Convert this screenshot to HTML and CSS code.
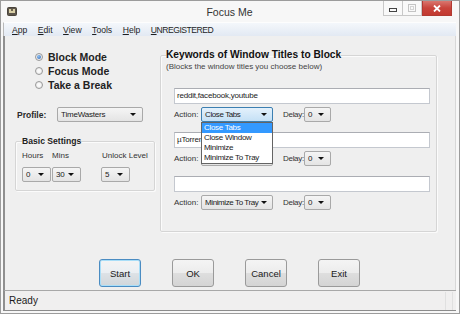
FILE: index.html
```html
<!DOCTYPE html>
<html>
<head>
    <title>Focus Me</title>
    <link rel="stylesheet" href="styles.css">
</head>
<body>
<div class="window">
    <!-- Title bar -->
    <div class="titlebar">
        <div class="tb-left">
            <svg class="app-icon" width="10" height="9" viewBox="0 0 10 9">
                <rect x="0.5" y="0.5" width="9" height="8" rx="1" fill="#5d564c" stroke="#4a443b"/>
                <rect x="2" y="2" width="6" height="4" fill="#d9cfa6"/>
                <rect x="4" y="2" width="2" height="2" fill="#6b624f"/>
            </svg>
        </div>
        <div class="title">Focus Me</div>
        <div class="tb-right">
            <span class="ctl ctl-min"><svg width="8" height="4" viewBox="0 0 8 4"><rect x="0.5" y="0.5" width="7" height="3" fill="none" stroke="#444"/></svg></span>
            <span class="ctl ctl-max"><svg width="8" height="8" viewBox="0 0 8 8"><rect x="0.5" y="0.5" width="7" height="7" fill="none" stroke="#c4c4c4"/><rect x="2.5" y="2.5" width="3" height="3" fill="none" stroke="#d4d4d4"/></svg></span>
            <span class="ctl ctl-close"><svg width="8" height="7" viewBox="0 0 8 7"><path d="M1 0.5 L7 6.5 M7 0.5 L1 6.5" stroke="#fff" stroke-width="1.8"/></svg></span>
        </div>
    </div>

    <!-- Menu -->
    <div class="menubar">
        <span><u>A</u>pp</span>
        <span><u>E</u>dit</span>
        <span><u>V</u>iew</span>
        <span><u>T</u>ools</span>
        <span><u>H</u>elp</span>
        <span class="unreg"><u>U</u>NREGISTERED</span>
    </div>

    <div class="client">
        <div class="panels">
            <div class="left">
                <div class="modes">
                    <div class="radio-row"><span class="radio checked"></span>Block Mode</div>
                    <div class="radio-row"><span class="radio"></span>Focus Mode</div>
                    <div class="radio-row"><span class="radio"></span>Take a Break</div>
                </div>
                <div class="profile-row">
                    <span class="profile-label">Profile:</span>
                    <div class="combo combo-profile"><span>TimeWasters</span><i class="arrow"></i></div>
                </div>
                <fieldset class="basic">
                    <legend>Basic Settings</legend>
                    <div class="basic-cols">
                        <div class="col col-hours">
                            <div class="lbl">Hours</div>
                            <div class="combo combo-small"><span>0</span><i class="arrow"></i></div>
                        </div>
                        <div class="col col-mins">
                            <div class="lbl">Mins</div>
                            <div class="combo combo-small"><span>30</span><i class="arrow"></i></div>
                        </div>
                        <div class="col col-unlock">
                            <div class="lbl">Unlock Level</div>
                            <div class="combo combo-small"><span>5</span><i class="arrow"></i></div>
                        </div>
                    </div>
                </fieldset>
            </div>

            <fieldset class="keywords">
                <legend>Keywords of Window Titles to Block</legend>
                <div class="subtitle">(Blocks the window titles you choose below)</div>

                <div class="kw-block first">
                    <div class="textbox">reddit,facebook,youtube</div>
                    <div class="action-row">
                        <span class="act-label">Action:</span>
                        <div class="combo combo-action active">
                            <span>Close Tabs</span><i class="arrow"></i>
                            <ul class="dropdown">
                                <li class="selected">Close Tabs</li>
                                <li>Close Window</li>
                                <li>Minimize</li>
                                <li>Minimize To Tray</li>
                            </ul>
                        </div>
                        <span class="delay-label">Delay:</span>
                        <div class="combo combo-delay"><span>0</span><i class="arrow"></i></div>
                    </div>
                </div>

                <div class="kw-block">
                    <div class="textbox">µTorrent</div>
                    <div class="action-row">
                        <span class="act-label">Action:</span>
                        <div class="combo combo-action"><span></span><i class="arrow"></i></div>
                        <span class="delay-label">Delay:</span>
                        <div class="combo combo-delay"><span>0</span><i class="arrow"></i></div>
                    </div>
                </div>

                <div class="kw-block">
                    <div class="textbox"></div>
                    <div class="action-row">
                        <span class="act-label">Action:</span>
                        <div class="combo combo-action"><span>Minimize To Tray</span><i class="arrow"></i></div>
                        <span class="delay-label">Delay:</span>
                        <div class="combo combo-delay"><span>0</span><i class="arrow"></i></div>
                    </div>
                </div>
            </fieldset>
        </div>

        <div class="buttons">
            <button class="btn btn-default">Start</button>
            <button class="btn">OK</button>
            <button class="btn">Cancel</button>
            <button class="btn">Exit</button>
        </div>
    </div>

    <div class="statusbar">
        <span>Ready</span>
        <span class="grip"></span>
    </div>
</div>
</body>
</html>
```

FILE: styles.css
```css
* {
    box-sizing: border-box;
}
body {
    margin: 0;
    font-family: "Liberation Sans", Arial, sans-serif;
    color: #1a1a1a;
    background: #fff;
    white-space: nowrap;
}
.window {
    width: 460px;
    height: 314px;
    border: 1px solid #9c9c9c;
    background: #f7f7f7;
    padding: 0 3px 2px 2px;
    display: flex;
    flex-direction: column;
}

/* title bar */
.titlebar {
    height: 21px;
    display: grid;
    grid-template-columns: 1fr auto 1fr;
    align-items: start;
}
.tb-left {
    padding: 6px 0 0 4px;
}
.app-icon {
    display: block;
}
.title {
    font-size: 10.5px;
    color: #333;
    padding-top: 5px;
}
.tb-right {
    display: flex;
    justify-content: flex-end;
    padding-right: 4px;
}
.ctl {
    height: 15px;
    display: flex;
    align-items: center;
    justify-content: center;
    border: 1px solid #c8c8c8;
    border-top: none;
    background: #f9f9f9;
}
.ctl-min {
    width: 19px;
    padding-top: 4px;
    border-right: none;
}
.ctl-max {
    width: 20px;
}
.ctl-close {
    width: 30px;
    border: 1px solid #b13a32;
    border-top: none;
    background: linear-gradient(#d9776f, #c9443b 50%, #c23a31);
}

/* menu */
.menubar {
    height: 14px;
    display: flex;
    align-items: center;
    gap: 10.5px;
    padding-left: 8px;
    font-size: 8.6px;
    color: #1e1e1e;
    background: linear-gradient(#f4f7fb, #e2e9f3);
    border-top: 1px solid #fdfdfd;
    border-left: 1px solid #b9b9b9;
}
.menubar u {
    text-decoration-thickness: 1px;
    text-underline-offset: 1px;
}
.unreg {
    letter-spacing: -0.5px;
}

/* client area */
.client {
    flex: 1;
    background: #efefef;
    border-left: 2px solid #8f8f8f;
    border-right: 1px solid #d8d8d8;
    display: flex;
    flex-direction: column;
}
.panels {
    display: flex;
    gap: 8px;
    padding: 13px 0 0 10px;
}
.left {
    width: 137px;
    padding-top: 1px;
}
.modes {
    padding-left: 20px;
}
.radio-row {
    height: 14px;
    display: flex;
    align-items: center;
    gap: 5px;
    font-size: 10.5px;
    font-weight: bold;
    color: #222;
}
.radio {
    width: 8px;
    height: 8px;
    border-radius: 50%;
    border: 1px solid #9a9a9a;
    background: radial-gradient(circle, #fafafa 30%, #dcdcdc);
    display: flex;
    align-items: center;
    justify-content: center;
}
.radio.checked::before {
    content: "";
    width: 4px;
    height: 4px;
    border-radius: 50%;
    background: radial-gradient(circle at 40% 35%, #8ec0ef, #2d62b3);
}

.profile-row {
    display: flex;
    align-items: center;
    margin-top: 15px;
    padding-left: 2px;
}
.profile-label {
    width: 40px;
    font-size: 8.5px;
    font-weight: bold;
    color: #2a2a2a;
}

/* combo boxes */
.combo {
    position: relative;
    height: 15px;
    display: flex;
    align-items: center;
    justify-content: space-between;
    padding: 0 6px 0 3px;
    border: 1px solid #a9a9a9;
    border-radius: 2px;
    background: linear-gradient(#f5f5f5, #e4e4e4);
    font-size: 8px;
    letter-spacing: -0.2px;
    color: #1a1a1a;
}
.arrow {
    flex: none;
    width: 0;
    height: 0;
    border-left: 3px solid transparent;
    border-right: 3px solid transparent;
    border-top: 3px solid #111;
}
.combo-profile {
    width: 86px;
}
.combo-small {
    width: 29px;
}
.combo-action {
    width: 72px;
    padding-right: 5px;
}
.combo-action span {
    letter-spacing: -0.4px;
}
.combo-action.active {
    border-color: #3c7fb1;
    background: linear-gradient(#e4f1fc, #c4e0f5);
}
.combo-delay {
    width: 27px;
}

/* drop down list over the first action box */
.dropdown {
    position: absolute;
    top: 14px;
    left: -1px;
    width: 72px;
    margin: 0;
    padding: 0;
    list-style: none;
    background: #fff;
    border: 1px solid #646464;
    z-index: 2;
}
.dropdown li {
    height: 10px;
    line-height: 10px;
    padding-left: 2px;
    font-size: 8px;
    letter-spacing: -0.3px;
    color: #1a1a1a;
}
.dropdown li.selected {
    background: #3399ff;
    color: #fff;
}

/* group boxes */
fieldset {
    margin: 0;
    border: 1px solid #d5d5d5;
    box-shadow: 1px 1px 0 #fbfbfb inset, 1px 1px 0 #fbfbfb;
    border-radius: 2px;
}
.basic {
    margin-top: 14px;
    padding: 4px 6px 8px 6px;
}
.basic legend {
    padding: 0;
    font-size: 8.6px;
    font-weight: bold;
    color: #222;
    line-height: 11px;
}
.basic-cols {
    display: flex;
}
.col-hours {
    width: 30px;
}
.col-mins {
    width: 49px;
}
.lbl {
    font-size: 8px;
    line-height: 10px;
    color: #333;
}
.col-unlock .lbl {
    padding-left: 1px;
}
.basic .combo {
    margin-top: 6px;
}

.keywords {
    width: 277px;
    padding: 1px 6px 21px 13px;
}
.keywords legend {
    margin-left: -8px;
    padding: 0;
    font-size: 10.2px;
    font-weight: bold;
    line-height: 12px;
    color: #111;
}
.subtitle {
    font-size: 8px;
    line-height: 10px;
    color: #444;
    margin-left: -8px;
}
.kw-block {
    margin-top: 10px;
}
.kw-block.first {
    margin-top: 16px;
}
.textbox {
    height: 16px;
    width: 256px;
    border: 1px solid #c4c8cf;
    border-top-color: #abadb3;
    background: #fff;
    font-size: 8px;
    letter-spacing: -0.2px;
    line-height: 14px;
    padding-left: 2px;
    color: #222;
}
.action-row {
    margin-top: 3px;
    display: flex;
    align-items: center;
    font-size: 8px;
    color: #333;
}
.act-label {
    width: 27px;
}
.delay-label {
    width: 21px;
    margin-left: 10px;
    letter-spacing: -0.3px;
}

/* buttons */
.buttons {
    display: flex;
    gap: 31px;
    padding-left: 94px;
    margin-top: 27px;
}
.btn {
    width: 42px;
    height: 28px;
    padding: 0;
    font-family: "Liberation Sans", Arial, sans-serif;
    font-size: 9.5px;
    color: #1a1a1a;
    border: 1px solid #9a9a9a;
    border-radius: 3px;
    background: linear-gradient(#f4f4f4, #ececec 50%, #dedede 51%, #d4d4d4);
}
.btn-default {
    border-color: #4a8cc2;
    box-shadow: inset 0 0 0 1px #a9def8;
    background: linear-gradient(#f4f4f4, #eaeef2 50%, #dde2e6 51%, #d1d6da);
}

/* status bar */
.statusbar {
    height: 21px;
    display: flex;
    align-items: center;
    justify-content: space-between;
    padding-left: 4px;
    border-top: 1px solid #a8a8a8;
    border-bottom: 1px solid #8c8c8c;
    border-left: 2px solid #8f8f8f;
    background: #f0efef;
    font-size: 10px;
    color: #1a1a1a;
}
.grip {
    width: 8px;
    height: 18px;
    border-left: 1px solid #e0e0e0;
    border-right: 1px solid #e0e0e0;
    margin-right: 3px;
}
```
